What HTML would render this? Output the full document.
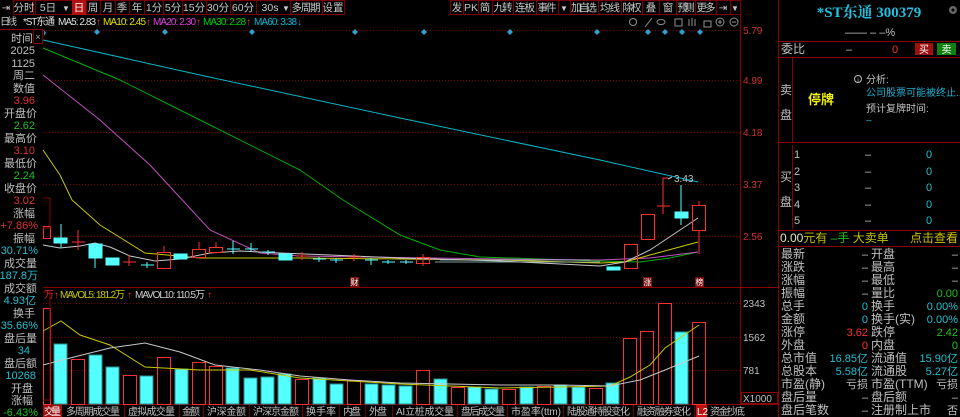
<!DOCTYPE html>
<html><head><meta charset="utf-8"><style>
html,body{margin:0;padding:0;background:#000;width:960px;height:417px;overflow:hidden}
svg{display:block;font-family:"Liberation Sans","Noto Sans CJK SC",sans-serif}
</style></head><body>
<svg width="960" height="417" viewBox="0 0 960 417" xmlns="http://www.w3.org/2000/svg">
<rect width="960" height="417" fill="#000"/>
<!-- toolbar -->
<g font-size="10.5" fill="#c8c8c8" text-anchor="middle">
<g stroke="#7a0000" fill="none" stroke-width="1">
<rect x="13.5" y="0.5" width="20" height="14"/><rect x="35.5" y="0.5" width="37" height="14"/><rect x="86.5" y="0.5" width="14" height="14"/><rect x="100.5" y="0.5" width="15" height="14"/><rect x="115.5" y="0.5" width="14" height="14"/><rect x="129.5" y="0.5" width="15" height="14"/><rect x="144.5" y="0.5" width="19" height="14"/><rect x="163.5" y="0.5" width="19" height="14"/><rect x="182.5" y="0.5" width="24" height="14"/><rect x="206.5" y="0.5" width="24" height="14"/><rect x="230.5" y="0.5" width="26" height="14"/><rect x="256.5" y="0.5" width="34" height="14"/><rect x="290.5" y="0.5" width="32" height="14"/><rect x="322.5" y="0.5" width="22" height="14"/>
<rect x="450.5" y="0.5" width="13" height="14"/><rect x="463.5" y="0.5" width="15" height="14"/><rect x="478.5" y="0.5" width="14" height="14"/><rect x="492.5" y="0.5" width="21" height="14"/><rect x="513.5" y="0.5" width="23" height="14"/><rect x="536.5" y="0.5" width="22" height="14"/><rect x="558.5" y="0.5" width="12" height="14"/><rect x="570.5" y="0.5" width="28" height="14"/><rect x="598.5" y="0.5" width="23" height="14"/><rect x="621.5" y="0.5" width="21" height="14"/><rect x="642.5" y="0.5" width="17" height="14"/><rect x="659.5" y="0.5" width="17" height="14"/><rect x="676.5" y="0.5" width="19" height="14"/><rect x="695.5" y="0.5" width="21" height="14"/><rect x="716.5" y="0.5" width="14" height="14"/><rect x="730.5" y="0.5" width="10" height="14"/>
</g>
<rect x="72" y="0" width="14" height="15" fill="#b01010"/>
<text x="6" y="11" font-size="10">⇥</text>
<text x="24" y="11">分时</text><text x="48" y="11">5日</text><text x="66" y="11" font-size="8">▼</text>
<text x="79" y="11" fill="#fff">日</text><text x="93" y="11">周</text><text x="108" y="11">月</text><text x="122" y="11">季</text><text x="137" y="11">年</text>
<text x="154" y="11">1分</text><text x="173" y="11">5分</text><text x="194" y="11">15分</text><text x="218" y="11">30分</text><text x="243" y="11">60分</text><text x="270" y="11">30s</text><text x="286" y="11" font-size="8">▼</text><text x="306" y="11" textLength="29">多周期</text><text x="333" y="11">设置</text>
<text x="457" y="11">发</text><text x="471" y="11">PK</text><text x="485" y="11">简</text><text x="503" y="11" textLength="19">九转</text><text x="525" y="11" textLength="20">连板</text><text x="547" y="11" textLength="19">事件</text><text x="564" y="11" font-size="8">▼</text><text x="584" y="11" textLength="26">加自选</text><text x="610" y="11" textLength="20">均线</text><text x="632" y="11" textLength="19">除权</text><text x="651" y="11">叠</text><text x="668" y="11">窗</text><text x="686" y="11" textLength="17">预测</text><text x="706" y="11" textLength="19">更多</text><text x="723" y="11" font-size="10">⇥</text><text x="735" y="11" font-size="8">▼</text>
</g>
<!-- legend row -->
<g font-size="10">
<text x="0" y="25" fill="#c8c8c8" textLength="17">日线</text>
<text x="23" y="25" fill="#e0e0e0" textLength="32">*ST东通</text>
<text x="58" y="25" fill="#e0e0e0" textLength="38">MA5: 2.83</text><text x="96" y="25" fill="#ff3030">↑</text>
<text x="103" y="25" fill="#e0e000" textLength="43">MA10: 2.45</text><text x="146" y="25" fill="#ff3030">↑</text>
<text x="153" y="25" fill="#e040e0" textLength="43">MA20: 2.30</text><text x="196" y="25" fill="#ff3030">↑</text>
<text x="203" y="25" fill="#00d000" textLength="43">MA30: 2.28</text><text x="246" y="25" fill="#ff3030">↑</text>
<text x="254" y="25" fill="#00b8d0" textLength="43">MA60: 3.38</text><text x="297" y="25" fill="#3080ff">↓</text>
</g>
<!-- small icons -->
<g stroke="#909090" fill="none" stroke-width="1">
<circle cx="633" cy="22" r="3.5"/><path d="M645 27 L652 18"/><ellipse cx="661" cy="22" rx="4" ry="2.5"/><rect x="675" y="19" width="7" height="7"/><path d="M689 26 V19 M692 26 V18 M695 26 V19"/><rect x="704" y="21" width="7" height="6"/><circle cx="720" cy="22" r="4"/><path d="M718 22 H722 M720 20 V24"/><circle cx="734" cy="22" r="4"/><path d="M732 22 H736"/>
</g>
<!-- frame lines -->
<g stroke="#8a0000" stroke-width="1" fill="none">
<path d="M740.5 15 V404 M778.5 0 V417 M43 287.5 H778 M43 404.5 H778 M0 29.5 H43"/>
<rect x="33.5" y="29.5" width="9" height="14"/>
</g>
<text x="38" y="40" font-size="9" fill="#aaa" text-anchor="middle">×</text>
<!-- grid -->
<g stroke="#7a0000" stroke-dasharray="1,2" stroke-width="1">
<path d="M43 30.5 H740 M43 80.5 H740 M43 132.5 H740 M43 184.5 H740 M43 236.5 H740 M43 303.5 H740 M43 337.5 H740 M43 370.5 H740"/>
</g>
<g font-size="10" fill="#d03030">
<text x="743" y="34">5.79</text><text x="743" y="84">4.99</text><text x="743" y="136">4.18</text><text x="743" y="188">3.37</text><text x="743" y="240">2.56</text>
</g>
<g font-size="10" fill="#c0c0c0">
<text x="743" y="307">2343</text><text x="743" y="341">1562</text><text x="743" y="374">781</text>
</g>
<rect x="741.5" y="392.5" width="36" height="11" fill="none" stroke="#8a0000"/>
<text x="743" y="402" font-size="10" fill="#c0c0c0">X1000</text>
<!-- diamonds -->
<g fill="#30a0d0">
<path d="M44 30 l2 3 -2 3 z"/>
<path d="M97 29l3 3-3 3-3-3z"/><path d="M165 29l3 3-3 3-3-3z"/><path d="M252 29l3 3-3 3-3-3z"/><path d="M355 29l3 3-3 3-3-3z"/><path d="M424 29l3 3-3 3-3-3z"/><path d="M510 29l3 3-3 3-3-3z"/><path d="M597 29l3 3-3 3-3-3z"/><path d="M648 29l3 3-3 3-3-3z"/><path d="M665 29l3 3-3 3-3-3z"/><path d="M682 29l3 3-3 3-3-3z"/><path d="M700 29l3 3-3 3-3-3z"/>
</g>
<!-- MA lines -->
<g fill="none" stroke-width="1">
<path stroke="#00b8c8" d="M43 40 L200 75 L400 118 L600 160 L698 182"/>
<path stroke="#00b000" d="M43 48 L120 80 L200 120 L300 170 L343 200 L400 235 L440 250 L480 257 L600 261 L640 262 L670 258 L698 252"/>
<path stroke="#c050c0" d="M43 75 L100 120 L150 165 L210 230 L260 253 L300 256 L500 259 L600 260 L650 258 L698 252"/>
<path stroke="#c8c800" d="M43 150 L60 175 L72 200 L100 225 L145 253 L200 258 L300 258 L400 259 L500 260 L600 263 L625 262 L650 255 L698 242"/>
<path stroke="#c8c8c8" d="M43 245 L60 248 L80 246 L95 243 L110 247 L130 256 L155 261 L180 259 L210 253 L240 251 L280 253 L330 255 L400 258 L500 261 L600 266 L625 262 L650 250 L698 218"/>
</g>
<!-- candles -->
<g stroke-width="1">
<g stroke="#ff3030" fill="none">
<rect x="43.5" y="226.5" width="7" height="12"/>
<path d="M78 230 V250 M72 242 H85"/>
<path d="M129 255 V266 M123 262 H136"/>
<rect x="157.5" y="252.5" width="13" height="16"/><path d="M164 246 V252"/>
<rect x="192.5" y="249.5" width="13" height="8"/><path d="M199 242 V249"/>
<rect x="209.5" y="247.5" width="13" height="5"/><path d="M216 242 V247"/>
<path d="M302 252 V260 M296 256 H309"/>
<path d="M354 254 V261 M348 257 H361"/>
<rect x="416.5" y="257.5" width="13" height="6"/><path d="M423 254 V266"/>
<rect x="624.5" y="244.5" width="13" height="24"/>
<rect x="641.5" y="214.5" width="13" height="25"/>
<path d="M663 178 V214 M657 206 H670 M663 178 H668"/>
<rect x="692.5" y="205.5" width="13" height="25"/><path d="M699 201 V205 M699 231 V254"/>
</g>
<g stroke="#54ffff" fill="#54ffff">
<rect x="54" y="238" width="13" height="5"/><path d="M61 224 V248" fill="none"/>
<rect x="89" y="244" width="13" height="14"/><path d="M95 258 V268" fill="none"/>
<rect x="106" y="258" width="13" height="7"/>
<path d="M147 262 V268 M141 265 H154" fill="none"/>
<rect x="174" y="254" width="13" height="5"/>
<path d="M233 241 V254 M227 249 H240 M251 243 V252 M245 249 H258 M268 250 V255 M262 252 H275" fill="none"/>
<rect x="279" y="254" width="13" height="6"/>
<path d="M319 257 V262 M313 259 H326 M336 258 V263 M330 260 H343 M371 258 V265 M365 260 H378 M388 260 V264 M382 262 H395 M406 260 V264 M400 262 H413" fill="none"/>
<rect x="607" y="267" width="13" height="3"/>
<rect x="675" y="212" width="13" height="6"/><path d="M681 185 V225" fill="none"/>
</g>
<g stroke="#a0c0c0" fill="none" opacity="0.8">
<path d="M435 262 H600 M440 260 H590"/>
</g>
</g>
<path d="M668 179 L672 177" stroke="#c0c0c0"/>
<text x="674" y="182" font-size="10" fill="#c0c0c0">3.43</text>
<!-- markers -->
<rect x="350" y="277" width="9" height="10" fill="#7a1010"/><text x="354.5" y="285" font-size="8" fill="#fff" text-anchor="middle">财</text>
<rect x="643" y="277" width="9" height="10" fill="#7a1010"/><text x="647.5" y="285" font-size="8" fill="#fff" text-anchor="middle">涨</text>
<rect x="695" y="277" width="9" height="10" fill="#7a1010"/><text x="699.5" y="285" font-size="8" fill="#fff" text-anchor="middle">榜</text>
<!-- volume legend -->
<g font-size="10">
<text x="44" y="298" fill="#d03030">万</text><text x="54" y="298" fill="#ff3030">↑</text>
<text x="60" y="298" fill="#c8c800" textLength="65">MAVOL5: 181.2万</text><text x="127" y="298" fill="#ff3030">↑</text>
<text x="135" y="298" fill="#d0d0d0" textLength="70">MAVOL10: 110.5万</text><text x="207" y="298" fill="#ff3030">↑</text>
</g>
<!-- volume bars -->
<g stroke-width="1">
<g stroke="#ff3030" fill="none">
<rect x="43.5" y="308.5" width="7" height="96"/>
<rect x="71.5" y="359.5" width="13" height="45"/>
<rect x="123.5" y="375.5" width="13" height="29"/>
<rect x="157.5" y="357.5" width="13" height="47"/>
<rect x="192.5" y="362.5" width="13" height="42"/>
<rect x="209.5" y="366.5" width="13" height="38"/>
<rect x="295.5" y="379.5" width="13" height="25"/>
<rect x="347.5" y="380.5" width="13" height="24"/>
<rect x="416.5" y="370.5" width="13" height="34"/>
<rect x="451.5" y="387.5" width="13" height="17"/>
<rect x="502.5" y="389.5" width="13" height="15"/>
<rect x="537.5" y="386.5" width="13" height="18"/>
<rect x="589.5" y="388.5" width="13" height="16"/>
<rect x="623.5" y="338.5" width="13" height="66"/>
<rect x="640.5" y="331.5" width="13" height="73"/>
<rect x="658.5" y="303.5" width="13" height="101"/>
<rect x="692.5" y="322.5" width="13" height="82"/>
</g>
<g fill="#54ffff" stroke="#2a9090">
<rect x="54" y="344" width="13" height="60"/>
<rect x="89" y="355" width="13" height="49"/>
<rect x="106" y="367" width="13" height="37"/>
<rect x="140" y="376" width="13" height="28"/>
<rect x="175" y="369" width="13" height="35"/>
<rect x="226" y="368" width="13" height="36"/>
<rect x="244" y="378" width="13" height="26"/>
<rect x="261" y="377" width="13" height="27"/>
<rect x="278" y="374" width="13" height="30"/>
<rect x="313" y="378" width="13" height="26"/>
<rect x="330" y="384" width="13" height="20"/>
<rect x="365" y="384" width="13" height="20"/>
<rect x="382" y="385" width="13" height="19"/>
<rect x="399" y="386" width="13" height="18"/>
<rect x="434" y="379" width="13" height="25"/>
<rect x="468" y="387" width="13" height="17"/>
<rect x="485" y="389" width="13" height="15"/>
<rect x="520" y="387" width="13" height="17"/>
<rect x="554" y="385" width="13" height="19"/>
<rect x="572" y="387" width="13" height="17"/>
<rect x="606" y="383" width="13" height="21"/>
<rect x="675" y="332" width="13" height="72"/>
</g>
</g>
<g fill="none">
<path stroke="#c8c800" d="M43 331 L61 321 L80 335 L110 345 L145 367 L200 370 L250 370 L300 378 L350 381 L400 384 L450 386 L500 388 L560 387 L610 386 L630 377 L650 365 L665 348 L699 325"/>
<path stroke="#c8c8c8" d="M43 365 L70 358 L110 348 L145 343 L180 352 L215 365 L260 370 L300 376 L350 380 L400 383 L450 384 L500 385 L560 385 L610 386 L640 380 L665 370 L699 356"/>
</g>
<!-- left info column -->
<g font-size="11" text-anchor="end">
<text x="33" y="42" fill="#c0c0c0">时间</text>
<text x="35" y="54" fill="#c0c0c0">2025</text>
<text x="35" y="67" fill="#c0c0c0">1125</text>
<text x="35" y="79" fill="#c0c0c0">周二</text>
<text x="35" y="92" fill="#c0c0c0">数值</text>
<text x="35" y="104" fill="#e03030">3.96</text>
<text x="37" y="117" fill="#c0c0c0">开盘价</text>
<text x="35" y="129" fill="#20c020">2.62</text>
<text x="37" y="142" fill="#c0c0c0">最高价</text>
<text x="35" y="154" fill="#e03030">3.10</text>
<text x="37" y="167" fill="#c0c0c0">最低价</text>
<text x="35" y="179" fill="#20c020">2.24</text>
<text x="37" y="192" fill="#c0c0c0">收盘价</text>
<text x="35" y="204" fill="#e03030">3.02</text>
<text x="35" y="217" fill="#c0c0c0">涨幅</text>
<text x="38" y="229" fill="#e03030">+7.86%</text>
<text x="35" y="242" fill="#c0c0c0">振幅</text>
<text x="38" y="254" fill="#20c0d0">30.71%</text>
<text x="37" y="267" fill="#c0c0c0">成交量</text>
<text x="38" y="279" fill="#20c0d0">187.8万</text>
<text x="37" y="292" fill="#c0c0c0">成交额</text>
<text x="36" y="304" fill="#20c0d0">4.93亿</text>
<text x="35" y="317" fill="#c0c0c0">换手</text>
<text x="38" y="329" fill="#20c0d0">35.66%</text>
<text x="37" y="342" fill="#c0c0c0">盘后量</text>
<text x="30" y="354" fill="#20c0d0">34</text>
<text x="37" y="367" fill="#c0c0c0">盘后额</text>
<text x="36" y="379" fill="#20c0d0">10268</text>
<text x="33" y="392" fill="#c0c0c0">开盘</text>
<text x="33" y="404" fill="#c0c0c0">涨幅</text>
<text x="38" y="416" fill="#20c020">-6.43%</text>
</g>
<path d="M43 198 H50 V228 H43 M43 292 H50 V400 H43" stroke="#8a0000" fill="none"/>
<!-- bottom tabs -->
<g font-size="10" fill="#c0c0c0">
<rect x="43" y="405" width="19" height="12" fill="#a01010"/>
<text x="44" y="415" fill="#fff" textLength="17">交量</text>
<text x="66" y="415" textLength="54">多周期成交量</text>
<text x="128" y="415" textLength="47">虚拟成交量</text>
<text x="182" y="415" textLength="18">金额</text>
<text x="207" y="415" textLength="39">沪深金额</text>
<text x="253" y="415" textLength="46">沪深京金额</text>
<text x="306" y="415" textLength="30">换手率</text>
<text x="343" y="415" textLength="18">内盘</text>
<text x="369" y="415" textLength="18">外盘</text>
<text x="396" y="415" textLength="58">AI立桩成交量</text>
<text x="461" y="415" textLength="44">盘后成交量</text>
<text x="511" y="415" textLength="50">市盈率(ttm)</text>
<text x="567" y="415" textLength="63">陆股通持股变化</text>
<text x="637" y="415" textLength="54">融资融券变化</text>
<rect x="696" y="405" width="11" height="12" fill="#c01010"/><text x="697" y="415" fill="#fff">L2</text>
<text x="710" y="415" textLength="35">资金抄底</text>
<g stroke="#6a0000"><path d="M124.5 405 V417 M179.5 405 V417 M203.5 405 V417 M249.5 405 V417 M302.5 405 V417 M339.5 405 V417 M365.5 405 V417 M392.5 405 V417 M457.5 405 V417 M507.5 405 V417 M563.5 405 V417 M633.5 405 V417 M694.5 405 V417"/></g>
</g>
<!-- right panel -->
<text x="869" y="17" font-size="15" font-weight="bold" fill="#20c0e0" text-anchor="middle" font-family="Liberation Serif,Noto Serif CJK SC,serif">*ST东通 300379</text>
<circle cx="953" cy="10" r="4" fill="#666"/><circle cx="953" cy="10" r="1.5" fill="#000"/>
<text x="845" y="36" font-size="11" fill="#c0c0c0">——  –  –%</text>
<path d="M778 41.5 H960" stroke="#8a0000"/>
<text x="781" y="53" font-size="12" fill="#c0c0c0">委比</text>
<text x="846" y="53" font-size="11" fill="#c0c0c0">–</text>
<text x="892" y="53" font-size="11" fill="#ff3030">0</text>
<rect x="915" y="43" width="18" height="12" fill="#a01010"/><text x="924" y="53" font-size="10" fill="#fff" text-anchor="middle">买</text>
<rect x="937" y="43" width="19" height="12" fill="#108010"/><text x="946.5" y="53" font-size="10" fill="#fff" text-anchor="middle">卖</text>
<g stroke="#8a0000" fill="none"><path d="M778 57.5 H960 M778 142.5 H960 M778 230.5 H960 M778 246.5 H960 M792.5 58 V142 M792.5 145 V229"/></g>
<g font-size="12" fill="#c0c0c0">
<text x="780" y="94">卖</text><text x="780" y="119">盘</text>
<text x="780" y="181">买</text><text x="780" y="206">盘</text>
</g>
<text x="808" y="104" font-size="13" font-weight="bold" fill="#f0f000">停牌</text>
<circle cx="858" cy="79" r="3.5" stroke="#bbb" fill="none"/><text x="858" y="82" font-size="6" fill="#bbb" text-anchor="middle">i</text>
<text x="866" y="83" font-size="10" fill="#c0c0c0">分析:</text>
<text x="866" y="96" font-size="10" fill="#20b0d0">公司股票可能被终止...</text>
<text x="866" y="112" font-size="10" fill="#c0c0c0">预计复牌时间:</text>
<text x="866" y="123" font-size="10" fill="#20b0d0">–</text>
<g font-size="11" fill="#c0c0c0">
<text x="794" y="158">1</text><text x="794" y="175">2</text><text x="794" y="191">3</text><text x="794" y="208">4</text><text x="794" y="224">5</text>
<text x="865" y="158">–</text><text x="865" y="175">–</text><text x="865" y="191">–</text><text x="865" y="208">–</text><text x="865" y="224">–</text>
</g>
<g font-size="11" fill="#20c0d0">
<text x="926" y="158">0</text><text x="926" y="175">0</text><text x="926" y="191">0</text><text x="926" y="208">0</text><text x="926" y="224">0</text>
</g>
<text x="780" y="242" font-size="12" fill="#e8e8b0">0.00<tspan fill="#c0c000">元有</tspan> <tspan fill="#20c020">–手</tspan> <tspan fill="#c0c000">大卖单</tspan></text>
<text x="958" y="242" font-size="12" fill="#d0c000" text-anchor="end">点击查看</text>
<g font-size="12" fill="#c0c0c0">
<text x="781" y="258">最新</text><text x="781" y="271">涨跌</text><text x="781" y="284">涨幅</text><text x="781" y="297">振幅</text><text x="781" y="310">总手</text><text x="781" y="323">金额</text><text x="781" y="336">涨停</text><text x="781" y="349">外盘</text><text x="781" y="362">总市值</text><text x="781" y="375">总股本</text><text x="781" y="388">市盈(静)</text><text x="781" y="401">盘后量</text><text x="781" y="414">盘后笔数</text>
<text x="871" y="258">开盘</text><text x="871" y="271">最高</text><text x="871" y="284">最低</text><text x="871" y="297">量比</text><text x="871" y="310">换手</text><text x="871" y="323">换手(实)</text><text x="871" y="336">跌停</text><text x="871" y="349">内盘</text><text x="871" y="362">流通值</text><text x="871" y="375">流通股</text><text x="871" y="388">市盈(TTM)</text><text x="871" y="401">盘后额</text><text x="871" y="414">注册制上市</text>
</g>
<g font-size="11" text-anchor="end">
<text x="868" y="258" fill="#c0c0c0">–</text><text x="868" y="271" fill="#c0c0c0">–</text><text x="868" y="284" fill="#c0c0c0">–</text><text x="868" y="297" fill="#c0c0c0">–</text>
<text x="868" y="310" fill="#20c0d0">0</text><text x="868" y="323" fill="#20c0d0">0</text><text x="868" y="336" fill="#ff3030">3.62</text><text x="868" y="349" fill="#ff3030">0</text>
<text x="868" y="362" fill="#20c0d0">16.85亿</text><text x="868" y="375" fill="#20c0d0">5.58亿</text><text x="868" y="388" fill="#c0c0c0">亏损</text><text x="868" y="401" fill="#c0c0c0">–</text><text x="868" y="414" fill="#c0c0c0">–</text>
<text x="958" y="258" fill="#c0c0c0">–</text><text x="958" y="271" fill="#c0c0c0">–</text><text x="958" y="284" fill="#c0c0c0">–</text><text x="958" y="297" fill="#20c020">0.00</text>
<text x="958" y="310" fill="#20c0d0">0.00%</text><text x="958" y="323" fill="#20c0d0">0.00%</text><text x="958" y="336" fill="#20c020">2.42</text><text x="958" y="349" fill="#20c020">0</text>
<text x="958" y="362" fill="#20c0d0">15.90亿</text><text x="958" y="375" fill="#20c0d0">5.27亿</text><text x="958" y="388" fill="#c0c0c0">亏损</text><text x="958" y="401" fill="#c0c0c0">–</text><text x="958" y="414" fill="#c0c0c0">否</text>
</g>
</svg>
</body></html>
